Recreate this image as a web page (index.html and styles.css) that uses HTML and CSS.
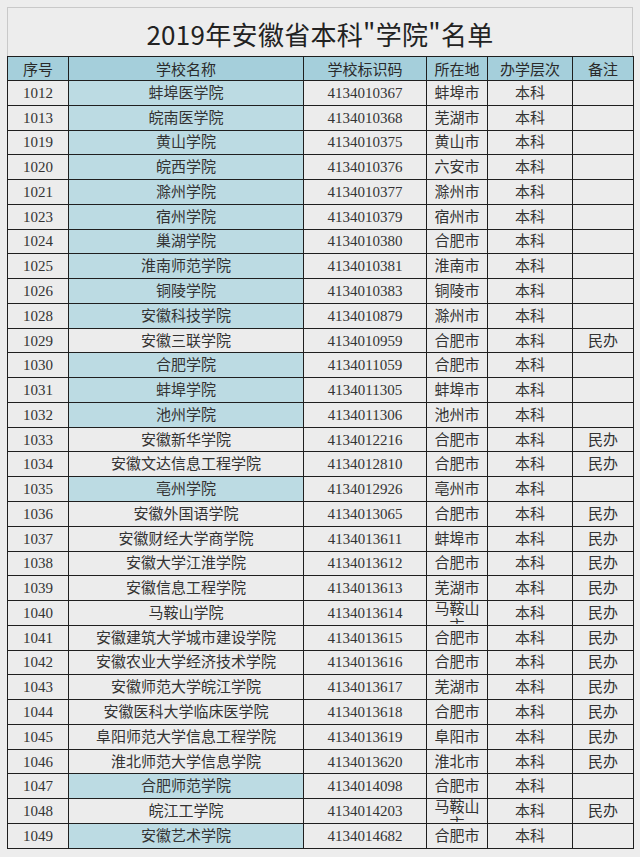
FILE: index.html
```html
<!DOCTYPE html>
<html lang="zh">
<head>
<meta charset="utf-8">
<title>2019年安徽省本科"学院"名单</title>
<link rel="stylesheet" href="styles.css">
</head>
<body>
<div class="sheet">
  <div class="title">2019年安徽省本科"学院"名单</div>
  <table class="list">
    <colgroup>
      <col class="c-no"><col class="c-name"><col class="c-code"><col class="c-city"><col class="c-level"><col class="c-note">
    </colgroup>
    <thead>
      <tr><th>序号</th><th>学校名称</th><th>学校标识码</th><th>所在地</th><th>办学层次</th><th>备注</th></tr>
    </thead>
    <tbody>
      <tr><td>1012</td><td class="hl">蚌埠医学院</td><td>4134010367</td><td>蚌埠市</td><td>本科</td><td></td></tr>
      <tr><td>1013</td><td class="hl">皖南医学院</td><td>4134010368</td><td>芜湖市</td><td>本科</td><td></td></tr>
      <tr><td>1019</td><td class="hl">黄山学院</td><td>4134010375</td><td>黄山市</td><td>本科</td><td></td></tr>
      <tr><td>1020</td><td class="hl">皖西学院</td><td>4134010376</td><td>六安市</td><td>本科</td><td></td></tr>
      <tr><td>1021</td><td class="hl">滁州学院</td><td>4134010377</td><td>滁州市</td><td>本科</td><td></td></tr>
      <tr><td>1023</td><td class="hl">宿州学院</td><td>4134010379</td><td>宿州市</td><td>本科</td><td></td></tr>
      <tr><td>1024</td><td class="hl">巢湖学院</td><td>4134010380</td><td>合肥市</td><td>本科</td><td></td></tr>
      <tr><td>1025</td><td class="hl">淮南师范学院</td><td>4134010381</td><td>淮南市</td><td>本科</td><td></td></tr>
      <tr><td>1026</td><td class="hl">铜陵学院</td><td>4134010383</td><td>铜陵市</td><td>本科</td><td></td></tr>
      <tr><td>1028</td><td class="hl">安徽科技学院</td><td>4134010879</td><td>滁州市</td><td>本科</td><td></td></tr>
      <tr><td>1029</td><td>安徽三联学院</td><td>4134010959</td><td>合肥市</td><td>本科</td><td>民办</td></tr>
      <tr><td>1030</td><td class="hl">合肥学院</td><td>4134011059</td><td>合肥市</td><td>本科</td><td></td></tr>
      <tr><td>1031</td><td class="hl">蚌埠学院</td><td>4134011305</td><td>蚌埠市</td><td>本科</td><td></td></tr>
      <tr><td>1032</td><td class="hl">池州学院</td><td>4134011306</td><td>池州市</td><td>本科</td><td></td></tr>
      <tr><td>1033</td><td>安徽新华学院</td><td>4134012216</td><td>合肥市</td><td>本科</td><td>民办</td></tr>
      <tr><td>1034</td><td>安徽文达信息工程学院</td><td>4134012810</td><td>合肥市</td><td>本科</td><td>民办</td></tr>
      <tr><td>1035</td><td class="hl">亳州学院</td><td>4134012926</td><td>亳州市</td><td>本科</td><td></td></tr>
      <tr><td>1036</td><td>安徽外国语学院</td><td>4134013065</td><td>合肥市</td><td>本科</td><td>民办</td></tr>
      <tr><td>1037</td><td>安徽财经大学商学院</td><td>4134013611</td><td>蚌埠市</td><td>本科</td><td>民办</td></tr>
      <tr><td>1038</td><td>安徽大学江淮学院</td><td>4134013612</td><td>合肥市</td><td>本科</td><td>民办</td></tr>
      <tr><td>1039</td><td>安徽信息工程学院</td><td>4134013613</td><td>芜湖市</td><td>本科</td><td>民办</td></tr>
      <tr><td>1040</td><td>马鞍山学院</td><td>4134013614</td><td class="wrap"><div class="clip">马鞍山市</div></td><td>本科</td><td>民办</td></tr>
      <tr><td>1041</td><td>安徽建筑大学城市建设学院</td><td>4134013615</td><td>合肥市</td><td>本科</td><td>民办</td></tr>
      <tr><td>1042</td><td>安徽农业大学经济技术学院</td><td>4134013616</td><td>合肥市</td><td>本科</td><td>民办</td></tr>
      <tr><td>1043</td><td>安徽师范大学皖江学院</td><td>4134013617</td><td>芜湖市</td><td>本科</td><td>民办</td></tr>
      <tr><td>1044</td><td>安徽医科大学临床医学院</td><td>4134013618</td><td>合肥市</td><td>本科</td><td>民办</td></tr>
      <tr><td>1045</td><td>阜阳师范大学信息工程学院</td><td>4134013619</td><td>阜阳市</td><td>本科</td><td>民办</td></tr>
      <tr><td>1046</td><td>淮北师范大学信息学院</td><td>4134013620</td><td>淮北市</td><td>本科</td><td>民办</td></tr>
      <tr><td>1047</td><td class="hl">合肥师范学院</td><td>4134014098</td><td>合肥市</td><td>本科</td><td></td></tr>
      <tr><td>1048</td><td>皖江工学院</td><td>4134014203</td><td class="wrap"><div class="clip">马鞍山市</div></td><td>本科</td><td>民办</td></tr>
      <tr><td>1049</td><td class="hl">安徽艺术学院</td><td>4134014682</td><td>合肥市</td><td>本科</td><td></td></tr>
    </tbody>
  </table>
</div>
</body>
</html>
```
FILE: styles.css
```css
html, body {
  margin: 0;
  padding: 0;
  background: #ededed;
}
.sheet {
  margin: 7px 0 0 7px;
  width: 626px;
}
.title {
  height: 49px;
  border: 1px solid #c9c9c9;
  border-bottom: none;
  display: flex;
  align-items: center;
  justify-content: center;
  font-family: "Noto Sans CJK SC", sans-serif;
  font-size: 26px;
  letter-spacing: 0.3px;
  color: #222;
  padding-top: 2px;
  box-sizing: border-box;
}
.list {
  border-collapse: collapse;
  width: 626px;
  table-layout: fixed;
  font-family: "Liberation Serif", "Noto Sans CJK SC", serif;
  font-size: 15px;
  color: #333;
}
.c-no { width: 61px; }
.c-name { width: 235px; }
.c-code { width: 123px; }
.c-city { width: 61px; }
.c-level { width: 85px; }
.c-note { width: 61px; }
.list th, .list td {
  border: 1px solid #1f1f1f;
  padding: 0;
  text-align: center;
  vertical-align: middle;
  white-space: nowrap;
  line-height: 18px;
}
.list th {
  height: 23px;
  background: #a5cfdb;
  font-weight: normal;
  font-family: "Noto Sans CJK SC", sans-serif;
  color: #2a2a2a;
}
.list td {
  height: 23.77px;
  background: #ececec;
}
.list td.hl {
  background: #bcdbe3;
}
.list td.wrap {
  white-space: normal;
  vertical-align: top;
}
.clip {
  height: 23px;
  overflow: hidden;
  line-height: 17px;
  padding: 0 6px;
  word-break: break-all;
}
```
